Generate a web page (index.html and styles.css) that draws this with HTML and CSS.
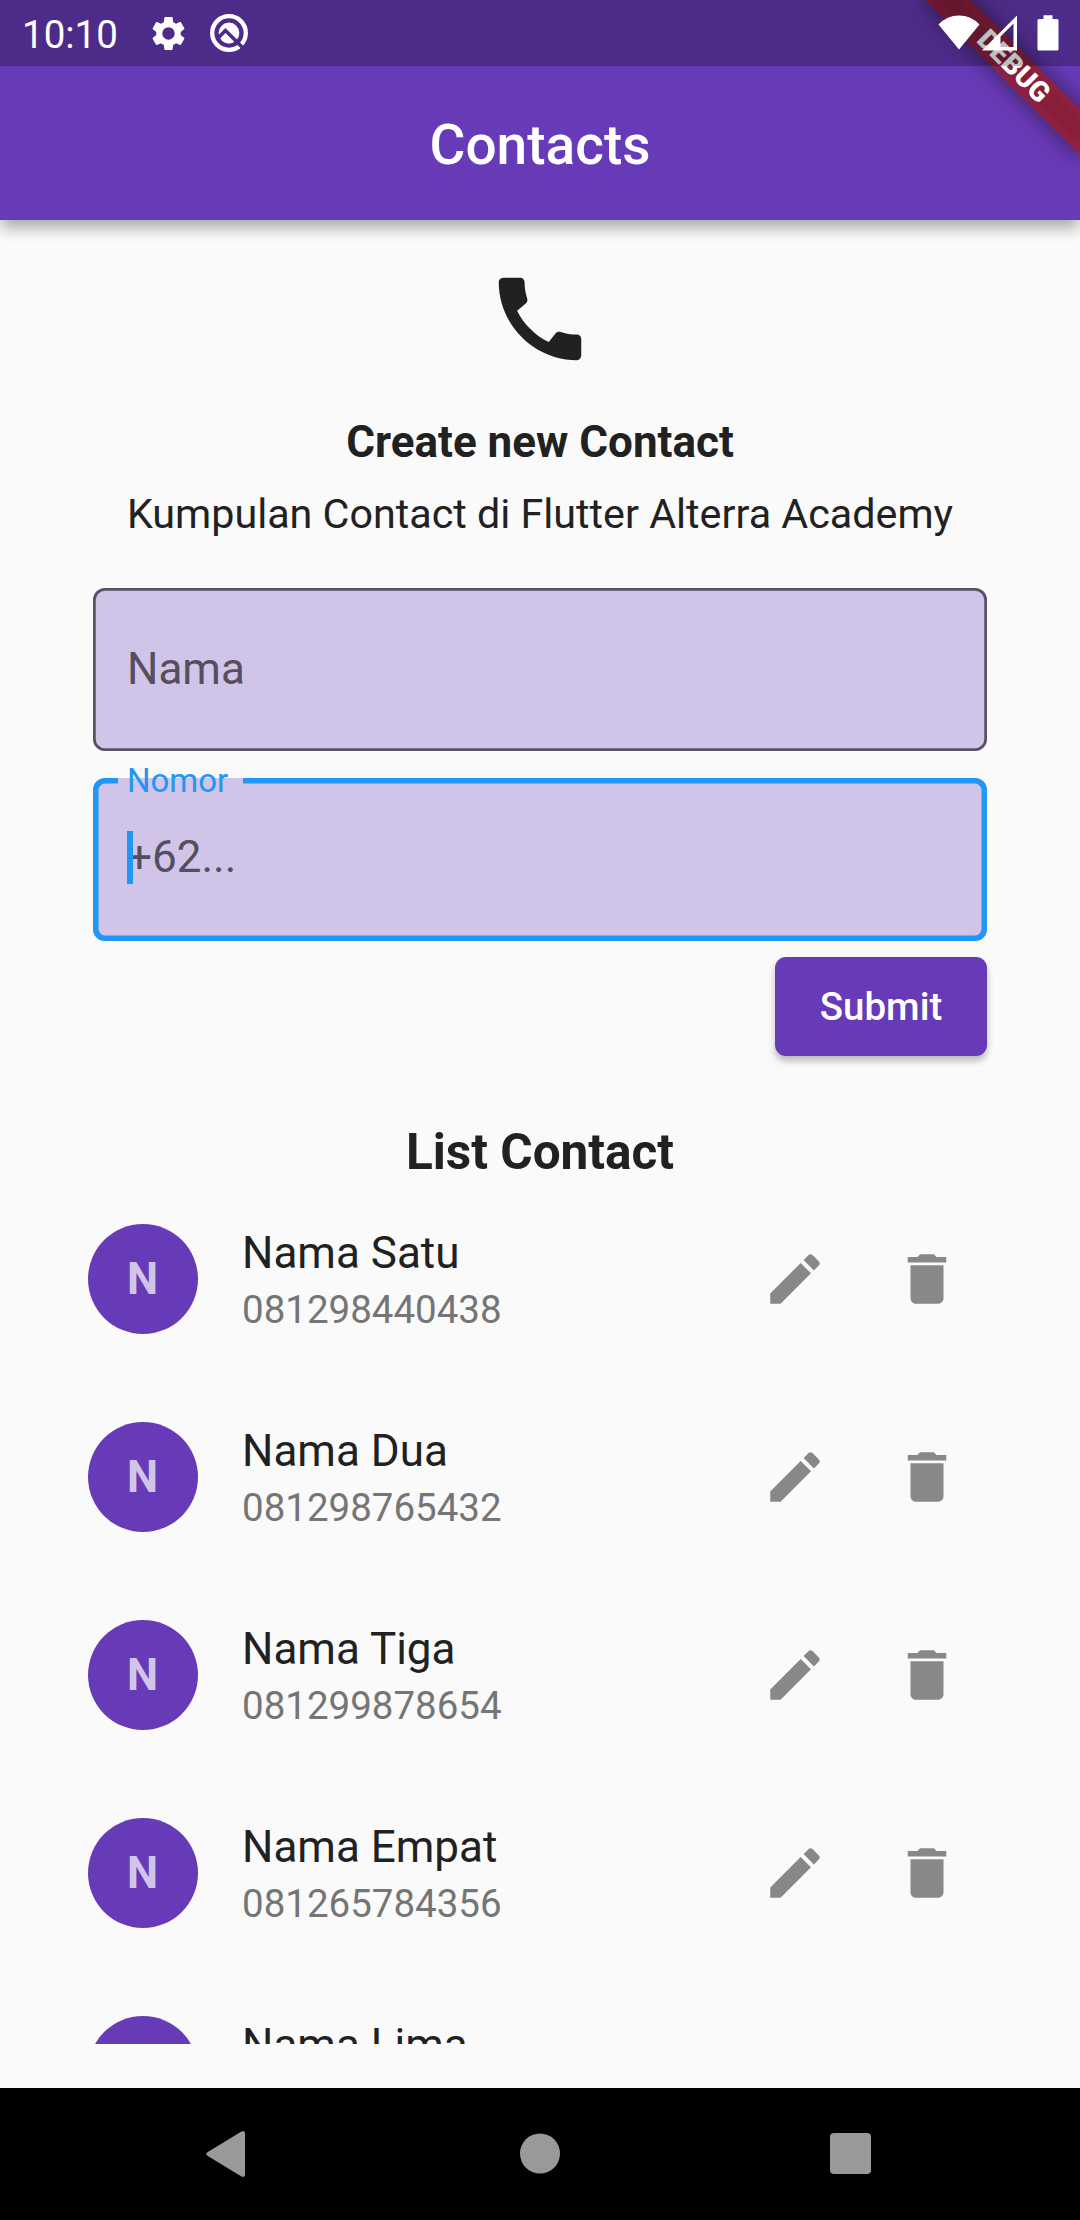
FILE: index.html
```
<!DOCTYPE html>
<html lang="id">
<head>
<meta charset="utf-8">
<title>Contacts</title>
<link rel="stylesheet" href="styles.css">
</head>
<body>
<svg class="sprite" aria-hidden="true">
  <symbol id="edit" viewBox="0 0 24 24"><path d="M3 17.25V21h3.75L17.81 9.94l-3.75-3.75L3 17.25zM20.71 7.04c.39-.39.39-1.02 0-1.41l-2.34-2.34c-.39-.39-1.02-.39-1.41 0l-1.83 1.83 3.75 3.75 1.83-1.83z"/></symbol>
  <symbol id="delete" viewBox="0 0 24 24"><path d="M6 19c0 1.1.9 2 2 2h8c1.1 0 2-.9 2-2V7H6v12zM19 4h-3.5l-1-1h-5l-1 1H5v2h14V4z"/></symbol>
</svg>
<div class="screen">
  <header class="appbar">
    <h1 class="appbar-title">Contacts</h1>
  </header>
  <div class="debug"><div class="ribbon-shadow"></div><div class="ribbon">DEBUG</div></div>
  <div class="statusbar">
    <span class="clock">10:10</span>
    <svg class="gear" viewBox="0 0 24 24"><path d="M19.14 12.94c.04-.3.06-.61.06-.94 0-.32-.02-.64-.07-.94l2.03-1.58c.18-.14.23-.41.12-.61l-1.92-3.32c-.12-.22-.37-.29-.59-.22l-2.39.96c-.5-.38-1.03-.7-1.62-.94l-.36-2.54c-.04-.24-.24-.41-.48-.41h-3.84c-.24 0-.43.17-.47.41l-.36 2.54c-.59.24-1.13.57-1.62.94l-2.39-.96c-.22-.08-.47 0-.59.22L2.74 8.87c-.12.21-.08.47.12.61l2.03 1.58c-.05.3-.09.63-.09.94s.02.64.07.94l-2.03 1.58c-.18.14-.23.41-.12.61l1.92 3.32c.12.22.37.29.59.22l2.39-.96c.5.38 1.03.7 1.62.94l.36 2.54c.05.24.24.41.48.41h3.84c.24 0 .44-.17.47-.41l.36-2.54c.59-.24 1.13-.56 1.62-.94l2.39.96c.22.08.47 0 .59-.22l1.92-3.32c.12-.22.07-.47-.12-.61l-2.01-1.58zM12 15.6c-1.98 0-3.6-1.62-3.6-3.6s1.62-3.6 3.6-3.6 3.6 1.62 3.6 3.6-1.62 3.6-3.6 3.6z"/></svg>
    <svg class="qmark" viewBox="0 0 40 40">
      <circle cx="20" cy="20" r="16.8" class="ring"/>
      <circle cx="20" cy="20" r="10.4"/>
      <path class="cut" d="M8.500 25.500l8-8L35 36"/>
      <path d="M11.800 26.200l4.400-4.400 7.600 7.600c-4.300 1.800-9 .6-12-3.200z"/>
    </svg>
    <div class="signals">
      <svg width="42" height="36" viewBox="0 0 42 36"><path d="M.5 9.500Q9 .5 21 .5T41.500 9.500L21 34.500z"/></svg>
      <svg width="36" height="36" viewBox="0 0 36 36"><path fill-rule="evenodd" d="M0 35.500L35 .5v35zM18.500 21.500v10.500h13V8.500z"/></svg>
      <svg width="22" height="36" viewBox="0 0 22 36"><path d="M6.500 .3h9v3.700h4.500q1.500 0 1.500 1.500v28.500q0 1.500-1.500 1.500H2q-1.500 0-1.500-1.500V5.500Q.5 4 2 4h4.500z"/></svg>
    </div>
  </div>

  <main class="content">
    <svg class="phone" viewBox="0 0 24 24"><path d="M20.010 15.380c-1.230 0-2.420-.2-3.530-.56-.35-.12-.74-.03-1.010.24l-1.570 1.970c-2.830-1.350-5.480-3.900-6.890-6.830l1.950-1.660c.27-.28.35-.67.24-1.020-.37-1.110-.56-2.300-.56-3.530 0-.54-.45-.99-.99-.99H4.190C3.650 3 3 3.240 3 3.990 3 13.280 10.730 21 20.010 21c.71 0 .99-.63.99-1.180v-3.450c0-.54-.45-.99-.99-.99z"/></svg>
    <h2 class="title">Create new Contact</h2>
    <p class="subtitle">Kumpulan Contact di Flutter Alterra Academy</p>
    <form class="form">
      <div class="field"><span class="placeholder">Nama</span></div>
      <div class="field focused">
        <span class="label">Nomor</span>
        <span class="caret"></span>
        <span class="placeholder">+62...</span>
      </div>
      <button class="submit" type="button">Submit</button>
    </form>
    <h2 class="list-title">List Contact</h2>
    <ul class="list">
      <li class="contact">
        <span class="avatar">N</span>
        <div class="info"><span class="name">Nama Satu</span><span class="number">081298440438</span></div>
        <svg class="action"><use href="#edit"/></svg><svg class="action"><use href="#delete"/></svg>
      </li>
      <li class="contact">
        <span class="avatar">N</span>
        <div class="info"><span class="name">Nama Dua</span><span class="number">081298765432</span></div>
        <svg class="action"><use href="#edit"/></svg><svg class="action"><use href="#delete"/></svg>
      </li>
      <li class="contact">
        <span class="avatar">N</span>
        <div class="info"><span class="name">Nama Tiga</span><span class="number">081299878654</span></div>
        <svg class="action"><use href="#edit"/></svg><svg class="action"><use href="#delete"/></svg>
      </li>
      <li class="contact">
        <span class="avatar">N</span>
        <div class="info"><span class="name">Nama Empat</span><span class="number">081265784356</span></div>
        <svg class="action"><use href="#edit"/></svg><svg class="action"><use href="#delete"/></svg>
      </li>
      <li class="contact">
        <span class="avatar"></span>
        <div class="info"><span class="name">Nama Lima</span></div>
      </li>
    </ul>
  </main>

  <nav class="navbar">
    <svg width="44" height="46" viewBox="0 0 44 46"><path d="M2.800 21L36 .8q4-2.200 4 2v40.400q0 4.200-4 2L2.800 25q-3.200-2 0-4z"/></svg>
    <svg width="42" height="42" viewBox="0 0 42 42"><circle cx="21" cy="20.500" r="20"/></svg>
    <svg width="42" height="42" viewBox="0 0 42 42"><rect width="41" height="41" rx="4"/></svg>
  </nav>
</div>
</body>
</html>
```
FILE: styles.css
```
* { box-sizing: border-box; }
body, h1, h2, p, ul { margin: 0; padding: 0; }
body {
  background: #fafafa;
  color: #212121;
  font-family: Roboto, sans-serif;
}
.sprite { position: absolute; width: 0; height: 0; }
.screen {
  position: relative;
  display: flex;
  flex-direction: column;
  width: 1080px;
  height: 2220px;
  overflow: hidden;
}

/* top bars */
.appbar {
  position: relative;
  z-index: 1;
  flex: none;
  display: flex;
  align-items: center;
  justify-content: center;
  height: 220px;
  padding-top: 70px;
  background: #673ab7;
  box-shadow: 0 9px 14px -1px rgba(0, 0, 0, .32);
}
.appbar-title { font-size: 55px; font-weight: 500; line-height: 64px; color: #fff; }
.debug {
  position: absolute;
  z-index: 2;
  top: 0;
  right: 0;
  width: 280px;
  height: 220px;
  overflow: hidden;
}
.ribbon, .ribbon-shadow {
  position: absolute;
  top: 77px;
  right: -110px;
  width: 220px;
  height: 33px;
  transform-origin: 110px -77px;
  transform: rotate(45deg);
}
.ribbon-shadow {
  background: rgba(0, 0, 0, .5);
  filter: blur(11px);
}
.ribbon {
  background: rgba(183, 28, 28, .627);
  color: #fff;
  font-size: 28px;
  font-weight: 900;
  line-height: 33px;
  text-align: center;
}
.statusbar {
  position: absolute;
  z-index: 3;
  inset: 0 0 auto 0;
  display: flex;
  align-items: center;
  height: 66px;
  padding: 0 21px 0 22px;
  background: rgba(0, 0, 0, .25);
  color: #fff;
}
.statusbar svg { fill: #fff; }
.clock { width: 126px; font-size: 38.5px; line-height: 62px; padding-top: 4px; }
.gear { width: 41px; height: 41px; }
.qmark { width: 40px; height: 40px; margin-left: 20px; }
.statusbar .ring { fill: none; stroke: #fff; stroke-width: 4.3; }
.statusbar .cut { fill: none; stroke: #4d2c89; stroke-width: 3.6; }
.signals { display: flex; margin-left: auto; }
.signals svg:nth-child(2) { margin: 0 19px 0 2px; }

/* page body */
.content {
  flex: 1;
  min-height: 0;
  display: flex;
  flex-direction: column;
  align-items: center;
  padding: 44px 88px;
}
.phone { flex: none; width: 110px; height: 110px; fill: #212121; }
.title { margin-top: 42px; font-size: 44px; line-height: 52px; font-weight: 700; }
.subtitle { margin-top: 22px; font-size: 41.25px; line-height: 48px; white-space: nowrap; }
.form { width: 894px; margin-top: 50px; display: flex; flex-direction: column; }
.field {
  position: relative;
  display: flex;
  align-items: center;
  height: 163px;
  margin-bottom: 27px;
  padding: 0 34px 2px;
  border-radius: 12px;
  background: #d1c4e9;
  box-shadow: inset 0 0 0 2.75px #5a5164;
  color: #544e5d;
  font-size: 44px;
  line-height: 52px;
}
.focused {
  margin-bottom: 16px;
  padding-bottom: 6px;
  box-shadow: inset 0 0 0 5.5px #2196f3;
}
.label {
  position: absolute;
  top: -16px;
  left: 25px;
  width: 125px;
  padding-left: 9px;
  background: linear-gradient(transparent 16px, #d1c4e9 16px, #d1c4e9 23px, transparent 23px);
  color: #2196f3;
  font-size: 33px;
  line-height: 38px;
}
.caret {
  position: absolute;
  z-index: 1;
  left: 34px;
  top: 53px;
  width: 6px;
  height: 53px;
  background: #2196f3;
}
.submit {
  align-self: flex-end;
  width: 212px;
  height: 99px;
  padding: 0;
  border: 0;
  border-radius: 11px;
  background: #673ab7;
  box-shadow: 0 5px 7px rgba(0, 0, 0, .26);
  color: #fff;
  font: 500 38.5px/45px Roboto, sans-serif;
}
.list-title { margin-top: 68px; font-size: 49.5px; line-height: 56px; font-weight: 700; }
.list {
  flex: 1;
  min-height: 0;
  align-self: stretch;
  overflow: hidden;
  list-style: none;
}
.contact {
  display: flex;
  align-items: center;
  height: 198px;
  padding-right: 32px;
}
.avatar {
  width: 110px;
  height: 110px;
  padding-right: 1px;
  border-radius: 50%;
  background: #673ab7;
  color: #d1c4e9;
  font-size: 44px;
  font-weight: 700;
  line-height: 110px;
  text-align: center;
}
.info { flex: 1; align-self: flex-start; display: flex; flex-direction: column; margin-left: 44px; padding-top: 47px; }
.name { font-size: 44px; line-height: 52px; }
.number { margin-top: 8px; font-size: 38.5px; line-height: 46px; color: #757575; }
.action { width: 66px; height: 66px; margin-left: 66px; fill: #888; }

/* system navigation */
.navbar {
  flex: none;
  display: flex;
  justify-content: space-between;
  align-items: center;
  height: 132px;
  padding: 0 208px 0 205px;
  background: #000;
}
.navbar svg { fill: #999; }
```
